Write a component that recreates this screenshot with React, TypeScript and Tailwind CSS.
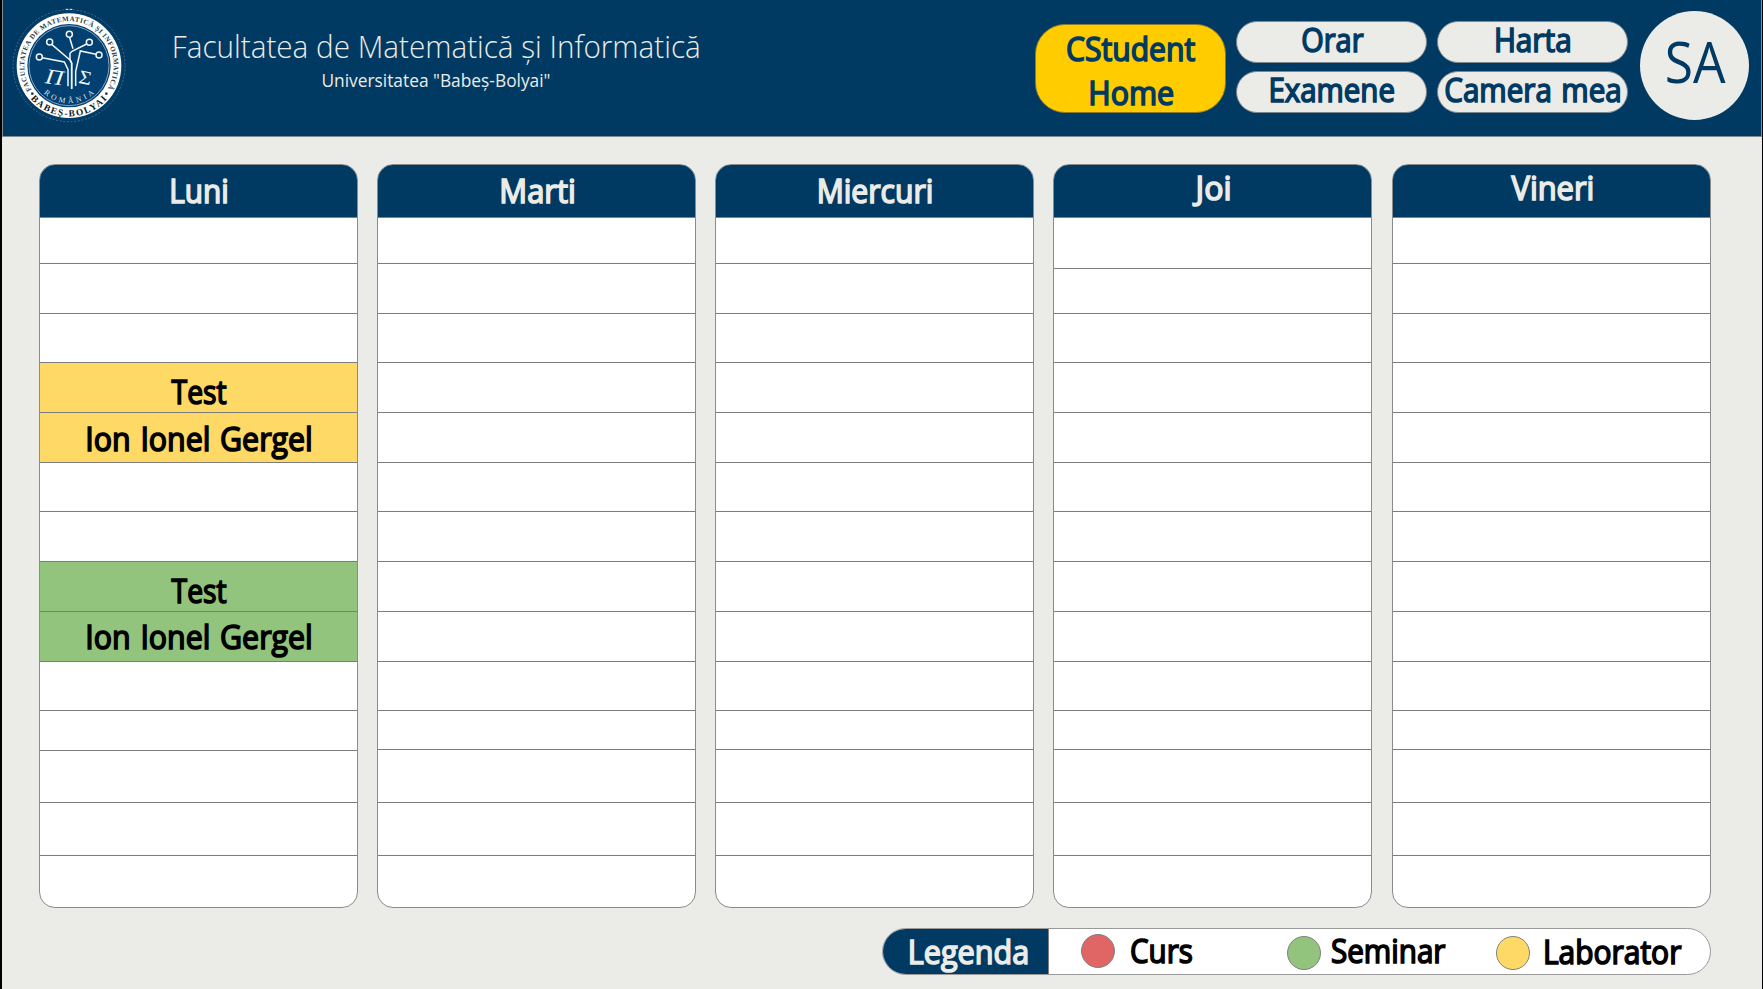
import type { ReactNode } from "react";
import clsx from "clsx";

const heavy = "inline-block whitespace-nowrap pl-px text-[32px] [-webkit-text-stroke:1.6px_currentColor]";

function Label({ className, children }: { className?: string; children: ReactNode }) {
  return <span className={clsx(heavy, className)}>{children}</span>;
}

function Logo() {
  return (
    <svg viewBox="9 0 411 405" className="h-[135px] w-[137px] shrink-0">
      <defs>
        <path id="ring-top" d="M 106.900 286.600 A 134 134 0 1 1 307.100 286.600" />
        <path id="ring-bottom" d="M 74.400 270.400 A 151 151 0 0 0 339.600 270.400" />
        <path id="inner-bottom" d="M 105.400 244.400 A 112 112 0 0 0 308.600 244.400" />
      </defs>
      <circle cx="207" cy="197" r="168" fill="none" stroke="#3b6b94" strokeWidth="3" strokeDasharray="6 5" />
      <circle cx="207" cy="197" r="161" fill="none" stroke="#0d4778" strokeWidth="3" strokeDasharray="3 4" />
      <path d="M197 28h8m4 0h8" stroke="#e8eef2" strokeWidth="3" />
      <circle cx="207" cy="197" r="157" fill="#ffffff" />
      <circle cx="207" cy="197" r="125" fill="#024072" />
      <circle cx="207" cy="197" r="120" fill="none" stroke="#9fb8cc" strokeWidth="2.5" />
      <g fill="#2d3b48" fontFamily="'Liberation Serif', serif">
        <text fontSize="21" fontWeight="700">
          <textPath href="#ring-top" startOffset="21" textLength="568" lengthAdjust="spacing">
            FACULTATEA DE MATEMATICĂ ȘI INFORMATICĂ
          </textPath>
        </text>
        <text fontSize="28" fontWeight="700" fill="#111820">
          <textPath href="#ring-bottom" startOffset="31" textLength="260" lengthAdjust="spacing">
            BABEȘ-BOLYAI
          </textPath>
        </text>
        <circle cx="97" cy="281" r="4" />
        <circle cx="319" cy="281" r="4" />
      </g>
      <text fill="#dbe5ec" fontSize="23" fontFamily="'Liberation Serif', serif">
        <textPath href="#inner-bottom" startOffset="44" textLength="166" lengthAdjust="spacing">
          ROMÂNIA
        </textPath>
      </text>
      <g fill="none" stroke="#f2f6f8" strokeWidth="4.500">
        <circle cx="118" cy="171" r="9" />
        <circle cx="149" cy="126" r="9" />
        <circle cx="208" cy="103" r="9" />
        <circle cx="268" cy="127" r="9" />
        <circle cx="297" cy="165" r="9" />
        <path d="M127 173l66 13 11 22v51" />
        <path d="M155 133l54 46 6 10v78" />
        <path d="M209 113l10 33" />
        <path d="M260 132l-44 22-6 6v18l5 12v76" />
        <path d="M288 163l-47-10-14 62v43" />
      </g>
      <g fill="#f2f6f8" fontFamily="'Liberation Serif', serif">
        <text x="136" y="253" fontSize="64" fontStyle="italic" textLength="54" lengthAdjust="spacingAndGlyphs" transform="rotate(8 163 232)">Π</text>
        <text x="237" y="253" fontSize="58" textLength="38" lengthAdjust="spacingAndGlyphs" transform="rotate(12 256 234)">Σ</text>
      </g>
    </svg>
  );
}

function Pill({ children, scale }: { children: ReactNode; scale: string }) {
  return (
    <button className="h-[42px] w-[191px] rounded-full border border-[#7c8790] bg-[#ebece8] text-center">
      <span className="flex h-10 items-start justify-center leading-9">
        <Label className={scale}>{children}</Label>
      </span>
    </button>
  );
}

type Slot = { h: string; text?: string; tone?: "lab" | "seminar"; scale?: string; pad?: string };

const tones = { lab: "bg-[#ffd966]", seminar: "bg-[#93c47d]" };

const firstRows: Slot[] = [{ h: "h-[46px]" }, { h: "h-[50px]" }, { h: "h-[49px]" }];
const thursdayRows: Slot[] = [{ h: "h-[51px]" }, { h: "h-[45px]" }, { h: "h-[49px]" }];

const emptyMiddle: Slot[] = [
  { h: "h-[50px]" },
  { h: "h-[50px]" },
  { h: "h-[49px]" },
  { h: "h-[50px]" },
  { h: "h-[50px]" },
  { h: "h-[50px]" },
  { h: "h-[49px]" },
  { h: "h-[39px]" },
  { h: "h-[53px]" },
  { h: "h-[53px]" },
];

const test = { text: "Test", scale: "scale-x-[.883]", pad: "pt-1" };
const teacher = { text: "Ion Ionel Gergel", scale: "scale-x-[.947] [word-spacing:2px]", pad: "pt-px" };

const mondayMiddle: Slot[] = [
  { h: "h-[50px]", tone: "lab", ...test },
  { h: "h-[50px]", tone: "lab", ...teacher },
  { h: "h-[49px]" },
  { h: "h-[50px]" },
  { h: "h-[50px]", tone: "seminar", ...test },
  { h: "h-[50px]", tone: "seminar", ...teacher, pad: "pt-0" },
  { h: "h-[49px]" },
  { h: "h-[40px]" },
  { h: "h-[52px]" },
  { h: "h-[53px]" },
];

const days: { name: string; scale: string; lift?: boolean; rows: Slot[] }[] = [
  { name: "Luni", scale: "scale-x-[.93]", rows: [...firstRows, ...mondayMiddle] },
  { name: "Marti", scale: "scale-x-[.965]", rows: [...firstRows, ...emptyMiddle] },
  { name: "Miercuri", scale: "scale-x-[.94]", rows: [...firstRows, ...emptyMiddle] },
  { name: "Joi", scale: "scale-x-100", lift: true, rows: [...thursdayRows, ...emptyMiddle] },
  { name: "Vineri", scale: "scale-x-[.963]", lift: true, rows: [...firstRows, ...emptyMiddle] },
];

function Day({ name, scale, lift, rows }: (typeof days)[number]) {
  return (
    <section className="flex h-[744px] w-[319px] flex-col overflow-hidden rounded-[16px] border border-[#8a8b8b] bg-white last:ml-px">
      <h2
        className={clsx(
          "flex h-[53px] shrink-0 justify-center border-b border-[#7f7f7f] bg-[#003a63] pl-px text-[#ebece8] leading-9",
          lift ? "pt-[5px]" : "pt-2",
        )}
      >
        <Label className={scale}>{name}</Label>
      </h2>
      {rows.map((r, i) => (
        <div
          key={i}
          className={clsx(
            "flex shrink-0 justify-center border-b border-[#7c7c7c] text-black leading-[50px]",
            r.h,
            r.pad,
            r.tone && tones[r.tone],
          )}
        >
          {r.text && <Label className={r.scale}>{r.text}</Label>}
        </div>
      ))}
    </section>
  );
}

function Dot({ className }: { className: string }) {
  return <span className={clsx("size-[34px] shrink-0 rounded-full border border-[#808080]", className)} />;
}

export default function App() {
  return (
    <div className="h-[989px] w-[1763px] overflow-hidden border-l-2 border-r border-black bg-[#ebece8] font-['Open_Sans',sans-serif]">
      <header className="flex h-[137px] border-b border-l border-r border-[#7f8a92] bg-[#003a63]">
        <Logo />
        <div className="flex w-[592px] flex-col items-center pt-6 text-[#ebece8]">
          <h1 className="scale-x-[.927] text-[32px] leading-[44px] font-light whitespace-nowrap">
            Facultatea de Matematică și Informatică
          </h1>
          <p className="scale-x-[.963] text-[18px] leading-6 whitespace-nowrap">Universitatea "Babeș-Bolyai"</p>
        </div>
        <nav className="ml-[303px] flex text-[#003a63]">
          <button className="mt-6 flex h-[89px] w-[191px] flex-col items-center rounded-[30px] border border-[#8a7a30] bg-[#ffcc00] pt-[2px] leading-[44px]">
            <Label className="scale-x-[.94]">CStudent</Label>
            <Label className="scale-x-[.95]">Home</Label>
          </button>
          <div className="mt-[21px] ml-[10px] grid h-[92px] grid-cols-2 gap-x-[10px] gap-y-2">
            <Pill scale="scale-x-[.903]">Orar</Pill>
            <Pill scale="scale-x-[.93]">Harta</Pill>
            <Pill scale="scale-x-[.92]">Examene</Pill>
            <Pill scale="scale-x-[.924] [word-spacing:2px]">Camera mea</Pill>
          </div>
          <div className="mt-[11px] ml-3 flex size-[109px] justify-center rounded-full bg-[#ebece8] pt-[22px] pl-px text-[56px] leading-[56px]">
            <span className="inline-block scale-x-[.92]">SA</span>
          </div>
        </nav>
      </header>

      <main className="flex gap-[19px] pt-[27px] pl-[37px]">
        {days.map((d) => (
          <Day key={d.name} {...d} />
        ))}
      </main>

      <footer className="mt-5 ml-[880px] flex h-[47px] w-[829px] overflow-hidden rounded-full border border-[#9a9a9a] bg-white text-black leading-[44px]">
        <div className="flex w-[166px] shrink-0 justify-center border-r border-[#7f7f7f] bg-[#003a63] pt-px pl-[5px] text-[#ebece8]">
          <Label className="scale-x-[.955]">Legenda</Label>
        </div>
        <div className="flex w-[207px] shrink-0 pl-8">
          <Dot className="mt-[5px] bg-[#e06666]" />
          <Label className="ml-[14px] origin-left scale-x-[.923]">Curs</Label>
        </div>
        <div className="flex w-[209px] shrink-0 pl-[31px]">
          <Dot className="mt-[7px] bg-[#93c47d]" />
          <Label className="ml-[9px] origin-left scale-x-[.926]">Seminar</Label>
        </div>
        <div className="flex shrink-0 pt-px pl-[31px]">
          <Dot className="mt-[6px] bg-[#ffd966]" />
          <Label className="ml-[12px] origin-left scale-x-[.936]">Laborator</Label>
        </div>
      </footer>
    </div>
  );
}
